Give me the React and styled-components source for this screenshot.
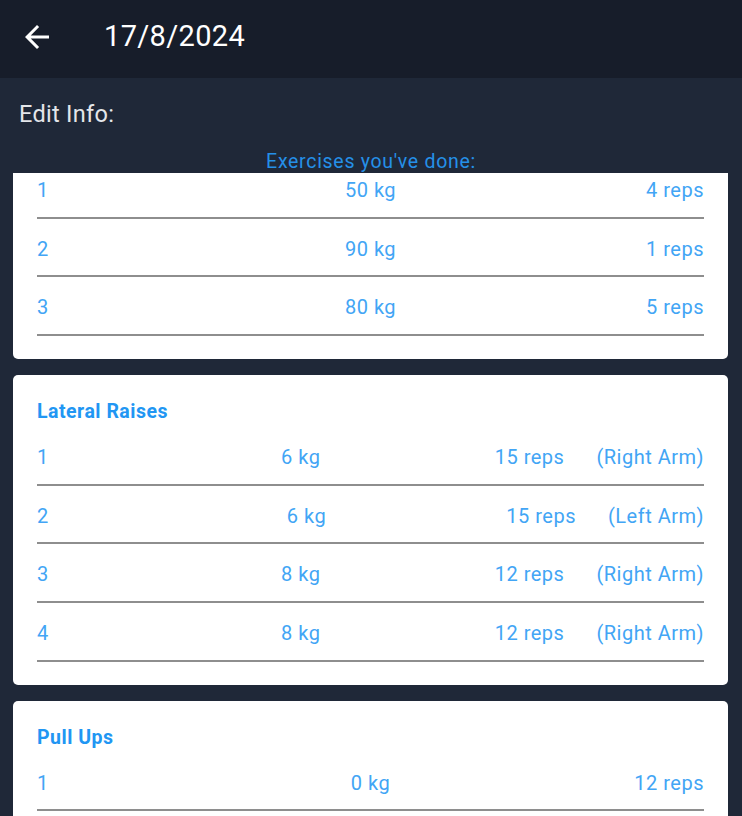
import React, { useLayoutEffect, useRef } from "react";
import styled, { createGlobalStyle } from "styled-components";

const GlobalStyle = createGlobalStyle`
  html, body {
    margin: 0;
    padding: 0;
    background: #1f2838;
    font-family: Roboto, "Noto Sans", sans-serif;
  }
`;

const workouts = [
  {
    name: "Bench Press",
    sets: [
      { kg: 50, reps: 4 },
      { kg: 90, reps: 1 },
      { kg: 80, reps: 5 },
    ],
  },
  {
    name: "Lateral Raises",
    sets: [
      { kg: 6, reps: 15, side: "(Right Arm)" },
      { kg: 6, reps: 15, side: "(Left Arm)" },
      { kg: 8, reps: 12, side: "(Right Arm)" },
      { kg: 8, reps: 12, side: "(Right Arm)" },
    ],
  },
  {
    name: "Pull Ups",
    sets: [
      { kg: 0, reps: 12 },
      { kg: 0, reps: 10 },
    ],
  },
];

const BackIcon = () => (
  <svg width="36" height="36" viewBox="0 0 24 24" fill="#ffffff">
    <path d="M20 11H7.83l5.59-5.59L12 4l-8 8 8 8 1.41-1.41L7.83 13H20v-2z" />
  </svg>
);

export default function App() {
  const listRef = useRef(null);

  // list is shown part way scrolled, like the screenshot
  useLayoutEffect(() => {
    if (listRef.current) listRef.current.scrollTop = 65;
  }, []);

  return (
    <>
      <GlobalStyle />
      <Page>
        <AppBar>
          <BackButton>
            <BackIcon />
          </BackButton>
          <Title>17/8/2024</Title>
        </AppBar>
        <EditLabel>Edit Info:</EditLabel>
        <SectionTitle>Exercises you've done:</SectionTitle>
        <List ref={listRef}>
          {workouts.map((w) => (
            <Card key={w.name}>
              <CardTitle>{w.name}</CardTitle>
              {w.sets.map((s, i) => (
                <SetRow key={i}>
                  <Num>{i + 1}</Num>
                  <Weight>{s.kg} kg</Weight>
                  <Reps>{s.reps} reps</Reps>
                  {s.side && <Side>{s.side}</Side>}
                </SetRow>
              ))}
            </Card>
          ))}
        </List>
      </Page>
    </>
  );
}

const Page = styled.div`
  height: 100vh;
  display: flex;
  flex-direction: column;
  overflow: hidden;
`;

const AppBar = styled.div`
  height: 78px;
  flex-shrink: 0;
  background: #171d2a;
  display: flex;
  align-items: center;
  padding: 0 0 0 19px;
  box-sizing: border-box;
`;

const BackButton = styled.div`
  width: 36px;
  height: 36px;
  display: flex;
  margin-top: -5px;
`;

const Title = styled.div`
  margin-left: 49px;
  margin-top: -6px;
  color: #ffffff;
  font-size: 29px;
  letter-spacing: 0.35px;
  font-weight: 400;
`;

const EditLabel = styled.div`
  color: #e4e6ea;
  font-size: 23.5px;
  letter-spacing: 0.3px;
  line-height: 28px;
  padding: 22px 0 0 19px;
`;

const SectionTitle = styled.div`
  color: #2590e8;
  font-size: 19.5px;
  letter-spacing: 0.7px;
  line-height: 22px;
  text-align: center;
  margin-top: 23px;
  height: 22px;
  flex-shrink: 0;
`;

const List = styled.div`
  flex: 1;
  overflow-y: auto;
  scrollbar-width: none;
  display: flex;
  flex-direction: column;
  gap: 16px;
  padding: 0 14px 40px 13px;
  &::-webkit-scrollbar {
    display: none;
  }
`;

const Card = styled.div`
  flex-shrink: 0;
  background: #ffffff;
  border-radius: 5px;
  padding: 25px 24px 23px;
`;

const CardTitle = styled.div`
  color: #2196f3;
  font-size: 19.5px;
  letter-spacing: 0.5px;
  font-weight: 700;
  line-height: 24px;
  margin-bottom: 3px;
`;

const SetRow = styled.div`
  display: flex;
  align-items: center;
  padding: 18px 0 14.67px;
  border-bottom: 2px solid #8e8e8e;
  color: #42a5f5;
  font-size: 20px;
  letter-spacing: 0.5px;
  line-height: 24px;
`;

const Num = styled.div`
  flex: 1;
`;

const Weight = styled.div`
  text-align: center;
`;

const Reps = styled.div`
  flex: 1;
  text-align: right;
`;

const Side = styled.div`
  margin-left: 32px;
`;
